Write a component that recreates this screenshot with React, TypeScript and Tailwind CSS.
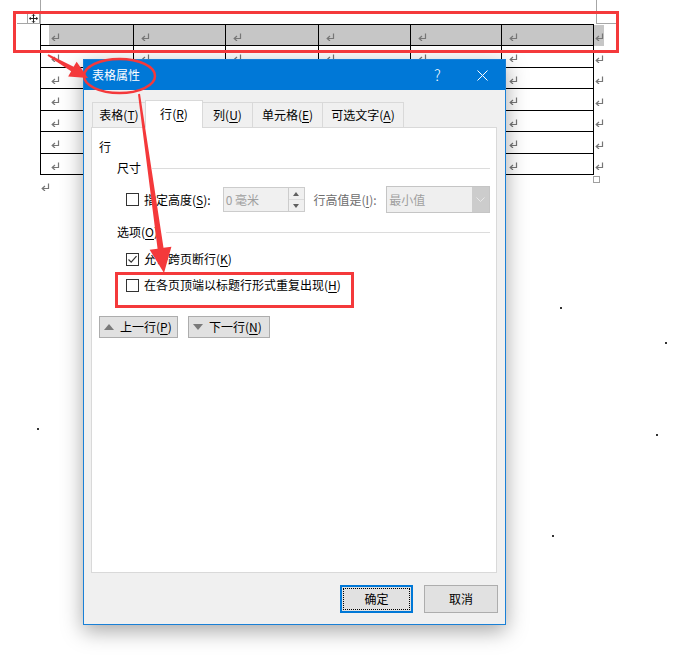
import React from 'react';

const colW = ['w-[93px]', 'w-[92px]', 'w-[93px]', 'w-[92px]', 'w-[91px]', 'w-[92px]'];

function Mark({ className = '' }: { className?: string }) {
  return (
    <svg className={`shrink-0 ${className}`} width="9" height="8" viewBox="0 0 9 8">
      <path d="M7.5 0.5 V5.5 H1.5" stroke="#767676" strokeWidth="1.2" fill="none" />
      <path d="M4 3 L1.2 5.5 L4 8" stroke="#767676" strokeWidth="1.2" fill="none" />
    </svg>
  );
}

function Check({ checked }: { checked?: boolean }) {
  return (
    <span className="w-[13px] h-[13px] border border-[#333] bg-white flex items-center justify-center shrink-0">
      {checked && (
        <svg width="11" height="11" viewBox="0 0 11 11">
          <path d="M1.5 5.5 L4.2 8.2 L9.5 2.2" stroke="#333" strokeWidth="1.2" fill="none" />
        </svg>
      )}
    </span>
  );
}

function Key({ k }: { k: string }) {
  return (
    <>
      (<span className="underline underline-offset-[2px]">{k}</span>)
    </>
  );
}

function arrow(x1: number, y1: number, x2: number, y2: number, t1: number, t2: number, hw: number, hl: number) {
  const len = Math.hypot(x2 - x1, y2 - y1);
  const ux = (x2 - x1) / len;
  const uy = (y2 - y1) / len;
  const px = -uy;
  const py = ux;
  const bx = x2 - ux * hl;
  const by = y2 - uy * hl;
  const pts = [
    [x1 + (px * t1) / 2, y1 + (py * t1) / 2],
    [bx + (px * t2) / 2, by + (py * t2) / 2],
    [bx + (px * hw) / 2, by + (py * hw) / 2],
    [x2, y2],
    [bx - (px * hw) / 2, by - (py * hw) / 2],
    [bx - (px * t2) / 2, by - (py * t2) / 2],
    [x1 - (px * t1) / 2, y1 - (py * t1) / 2],
  ];
  return pts.map((p) => p.join(',')).join(' ');
}

function DocTable() {
  return (
    <div className="pt-[24px] pl-[40px]">
      <div className="flex">
        <div className="w-[554px] border-t border-l border-black">
          {Array.from({ length: 7 }).map((_, r) => (
            <div key={r} className={`flex ${r % 2 === 0 ? 'h-[21px]' : 'h-[22px]'}`}>
              {colW.map((w, c) => (
                <div key={c} className={`${w} h-full border-r border-b border-black flex`}>
                  {r === 0 ? (
                    <div className={`flex-1 bg-[#c6c6c6] flex items-center pt-[3px] ${c === 0 ? 'ml-[8px] pl-[2px]' : 'pl-[7px]'}`}>
                      <Mark />
                    </div>
                  ) : (
                    <div className={`flex-1 flex items-center pt-[3px] ${c === 0 ? 'pl-[10px]' : 'pl-[7px]'}`}>
                      <Mark />
                    </div>
                  )}
                </div>
              ))}
            </div>
          ))}
        </div>
        <div className="pt-[1px] w-[12px]">
          {Array.from({ length: 7 }).map((_, r) => (
            <div key={r} className={`flex items-center ${r % 2 === 0 ? 'h-[21px]' : 'h-[22px]'}`}>
              <div className={`h-full flex items-center pl-[1px] pt-[3px] ${r === 0 ? 'bg-[#c6c6c6] w-[10px] h-[19px]' : ''}`}>
                <Mark />
              </div>
            </div>
          ))}
        </div>
      </div>
      <div className="w-[560px] flex justify-between items-start">
        <Mark className="mt-[8px] ml-[1px]" />
        <span className="w-[7px] h-[7px] border border-[#a0a0a0] mt-[1px]" />
      </div>
    </div>
  );
}

function Tab({ label, k, w, active }: { label: string; k: string; w: string; active?: boolean }) {
  return (
    <div
      className={`${w} flex items-center justify-center whitespace-nowrap border-t border-r border-[#d9d9d9] ${
        active ? 'h-[28px] bg-white relative z-10 -mb-[1px] pb-[2px] border-l' : 'h-[25px] bg-[#f0f0f0]'
      }`}
    >
      <span>
        {label}
        <Key k={k} />
      </span>
    </div>
  );
}

function Dialog() {
  return (
    <div className="absolute left-[83px] top-[59px] w-[423px] h-[566px] border border-[#1a80d6] bg-[#f0f0f0] flex flex-col shadow-[0_6px_20px_rgba(0,0,0,0.35)] text-[12px] leading-[16px] text-black">
      <div className="h-[30px] bg-[#0078d7] flex items-center text-white shrink-0">
        <span className="pl-[8px]">表格属性</span>
        <div className="ml-auto flex h-full">
          <div className="w-[45px] flex items-center justify-center text-[15px] font-light">?</div>
          <div className="w-[45px] flex items-center justify-center">
            <svg width="11" height="11" viewBox="0 0 11 11">
              <path d="M0.5 0.5 L10.5 10.5 M10.5 0.5 L0.5 10.5" stroke="white" strokeWidth="1" />
            </svg>
          </div>
        </div>
      </div>

      <div className="flex items-end pl-[8px] mt-[10px] shrink-0">
        <div className="w-[53px] h-[25px] flex items-center justify-center whitespace-nowrap border-t border-l border-[#d9d9d9] bg-[#f0f0f0]">
          <span>
            表格<Key k="T" />
          </span>
        </div>
        <Tab label="行" k="R" w="w-[58px]" active />
        <Tab label="列" k="U" w="w-[50px]" />
        <Tab label="单元格" k="E" w="w-[70px]" />
        <Tab label="可选文字" k="A" w="w-[81px]" />
      </div>

      <div className="ml-[7px] mr-[8px] h-[446px] border border-[#d9d9d9] bg-white flex flex-col pl-[7px] pr-[6px] shrink-0">
        <div className="mt-[11px]">行</div>
        <div className="flex items-center mt-[5px] pl-[18px]">
          <span>尺寸</span>
          <span className="flex-1 h-px bg-[#dcdcdc] ml-[11px]" />
        </div>

        <div className="flex items-center mt-[10px] pl-[27px] h-[27px]">
          <Check />
          <span className="ml-[5px] w-[79px]">
            指定高度<Key k="S" />:
          </span>
          <div className="w-[82px] h-[25px] border border-[#cccccc] bg-[#f0f0f0] flex">
            <span className="flex-1 pl-[2px] flex items-center text-[#a0a0a0]">0 毫米</span>
            <div className="w-[16px] border-l border-[#cccccc] flex flex-col">
              <div className="flex-1 flex items-center justify-center border-b border-[#dcdcdc]">
                <span className="w-0 h-0 border-l-[3px] border-r-[3px] border-b-[4px] border-l-transparent border-r-transparent border-b-[#606060]" />
              </div>
              <div className="flex-1 flex items-center justify-center">
                <span className="w-0 h-0 border-l-[3px] border-r-[3px] border-t-[4px] border-l-transparent border-r-transparent border-t-[#606060]" />
              </div>
            </div>
          </div>
          <span className="ml-[9px] w-[73px] text-[#6d6d6d]">
            行高值是<Key k="I" />:
          </span>
          <div className="w-[104px] h-[27px] border border-[#c5c5c5] bg-[#efefef] flex">
            <span className="flex-1 pl-[2px] flex items-center text-[#a0a0a0]">最小值</span>
            <div className="w-[17px] bg-[#cccccc] flex items-center justify-center">
              <svg width="9" height="6" viewBox="0 0 9 6">
                <path d="M0.5 0.5 L4.5 4.5 L8.5 0.5" stroke="#e8e8e8" strokeWidth="1" fill="none" />
              </svg>
            </div>
          </div>
        </div>

        <div className="flex items-center mt-[11px] pl-[18px]">
          <span>
            选项<Key k="O" />
          </span>
          <span className="flex-1 h-px bg-[#dcdcdc] ml-[8px]" />
        </div>

        <div className="flex items-center mt-[11px] pl-[27px]">
          <Check checked />
          <span className="ml-[5px]">
            允许跨页断行<Key k="K" />
          </span>
        </div>
        <div className="flex items-center mt-[10px] pl-[27px]">
          <Check />
          <span className="ml-[5px]">
            在各页顶端以标题行形式重复出现<Key k="H" />
          </span>
        </div>

        <div className="flex mt-[23px] gap-[10px]">
          <div className="w-[79px] h-[22px] border border-[#adadad] bg-[#e1e1e1] flex items-center pl-[4px] gap-[6px]">
            <span className="w-0 h-0 border-l-[5px] border-r-[5px] border-b-[6px] border-l-transparent border-r-transparent border-b-[#7a7a7a]" />
            <span>
              上一行<Key k="P" />
            </span>
          </div>
          <div className="w-[82px] h-[22px] border border-[#adadad] bg-[#e1e1e1] flex items-center pl-[4px] gap-[6px]">
            <span className="w-0 h-0 border-l-[5px] border-r-[5px] border-t-[6px] border-l-transparent border-r-transparent border-t-[#7a7a7a]" />
            <span>
              下一行<Key k="N" />
            </span>
          </div>
        </div>
      </div>

      <div className="flex justify-end gap-[11px] mt-[12px] pr-[7px]">
        <div className="w-[73px] h-[28px] border-2 border-[#0078d7] bg-[#e1e1e1] p-[1px]">
          <div className="w-full h-full border border-dotted border-black flex items-center justify-center">确定</div>
        </div>
        <div className="w-[74px] h-[28px] border border-[#adadad] bg-[#e1e1e1] flex items-center justify-center">取消</div>
      </div>
    </div>
  );
}

export default function App() {
  const red = '#f4393b';
  return (
    <div className="relative w-[680px] h-[661px] bg-white overflow-hidden font-['Noto_Sans_CJK_SC','Microsoft_YaHei',sans-serif]">
      <DocTable />

      {/* text boundary marks */}
      <div className="absolute left-[40px] top-0 w-px h-[24px] bg-[#a6a6a6]" />
      <div className="absolute left-[17px] top-[23px] w-[11px] h-px bg-[#a6a6a6]" />
      <div className="absolute left-[596px] top-0 w-px h-[24px] bg-[#a6a6a6]" />
      <div className="absolute left-[596px] top-[23px] w-[21px] h-px bg-[#a6a6a6]" />

      {/* table move handle */}
      <div className="absolute left-[27px] top-[12px] w-[13px] h-[12px] border border-[#a6a6a6] bg-white flex items-center justify-center">
        <svg width="9" height="9" viewBox="0 0 9 9">
          <path d="M4.5 0.5 V8.5 M0.5 4.5 H8.5" stroke="#222" strokeWidth="1" />
          <path d="M3 1.8 L4.5 0.3 L6 1.8 M3 7.2 L4.5 8.7 L6 7.2 M1.8 3 L0.3 4.5 L1.8 6 M7.2 3 L8.7 4.5 L7.2 6" stroke="#222" strokeWidth="0.9" fill="none" />
        </svg>
      </div>

      {/* stray dots */}
      <div className="absolute left-[560px] top-[307px] w-[2px] h-[2px] bg-[#333]" />
      <div className="absolute left-[665px] top-[342px] w-[2px] h-[2px] bg-[#333]" />
      <div className="absolute left-[656px] top-[434px] w-[2px] h-[2px] bg-[#333]" />
      <div className="absolute left-[552px] top-[535px] w-[2px] h-[2px] bg-[#333]" />
      <div className="absolute left-[37px] top-[428px] w-[2px] h-[2px] bg-[#333]" />

      <Dialog />

      {/* annotations */}
      <svg className="absolute inset-0 pointer-events-none" width="680" height="661" viewBox="0 0 680 661">
        <rect x="14.5" y="12.5" width="603" height="39" fill="none" stroke={red} strokeWidth="3" />
        <rect x="116.5" y="273.5" width="236" height="33" fill="none" stroke={red} strokeWidth="3" />
        <ellipse cx="119.5" cy="76" rx="35.5" ry="17" fill="none" stroke={red} strokeWidth="2.5" />
        <polygon points={arrow(48, 55, 88, 78, 2, 5, 17, 18)} fill={red} />
        <polygon points={arrow(139, 94, 164, 273, 2, 6, 22, 25)} fill={red} />
      </svg>
    </div>
  );
}
